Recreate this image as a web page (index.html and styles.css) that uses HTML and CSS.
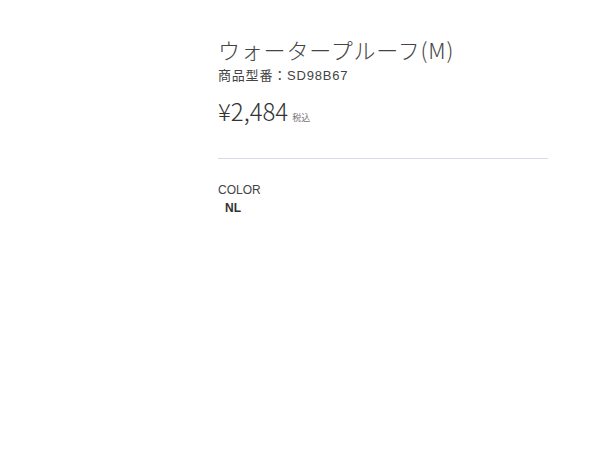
FILE: index.html
```html
<!DOCTYPE html>
<html lang="ja">
<head>
  <meta charset="UTF-8" />
  <meta name="viewport" content="width=device-width, initial-scale=1.0" />
  <title>ウォータープルーフ(M)</title>
  <link rel="stylesheet" href="styles.css">
</head>
<body>
  <div class="product">
    <h1 class="product-name">ウォータープルーフ(M)</h1>
    <p class="product-code">商品型番：SD98B67</p>
    <p class="product-price">¥2,484<span class="tax">税込</span></p>

    <div class="product-options">
      <p class="option-label">COLOR</p>
      <p class="option-value">NL</p>
    </div>
  </div>
</body>
</html>
```

FILE: styles.css
```css
body {
  margin: 0;
  background: #fff;
  font-family: "Liberation Sans", "Noto Sans CJK JP", sans-serif;
  color: #333;
}

.product {
  width: 330px;
  margin-left: 218px;
  padding-top: 34px;
}

.product-name {
  font-family: "Noto Sans CJK JP", sans-serif;
  font-size: 22px;
  font-weight: 300;
  letter-spacing: 0.8px;
  line-height: 30px;
  margin: 0;
  color: #444;
}

.product-code {
  font-size: 13px;
  letter-spacing: 0.8px;
  line-height: 18px;
  margin: 3px 0 0;
  color: #444;
}

.product-price {
  font-family: "Noto Sans CJK JP", sans-serif;
  font-size: 24px;
  font-weight: 300;
  line-height: 32px;
  margin: 10px 0 0;
  padding-bottom: 24px;
  border-bottom: 1px solid #d6d9e6;
  color: #333;
}

.tax {
  font-size: 9px;
  font-weight: 400;
  margin-left: 4px;
  color: #777;
}

.product-options {
  padding-top: 23px;
}

.option-label {
  font-size: 12px;
  line-height: 16px;
  margin: 0;
  color: #444;
}

.option-value {
  font-size: 12px;
  font-weight: bold;
  line-height: 16px;
  margin: 2px 0 0 7px;
  color: #333;
}
```
